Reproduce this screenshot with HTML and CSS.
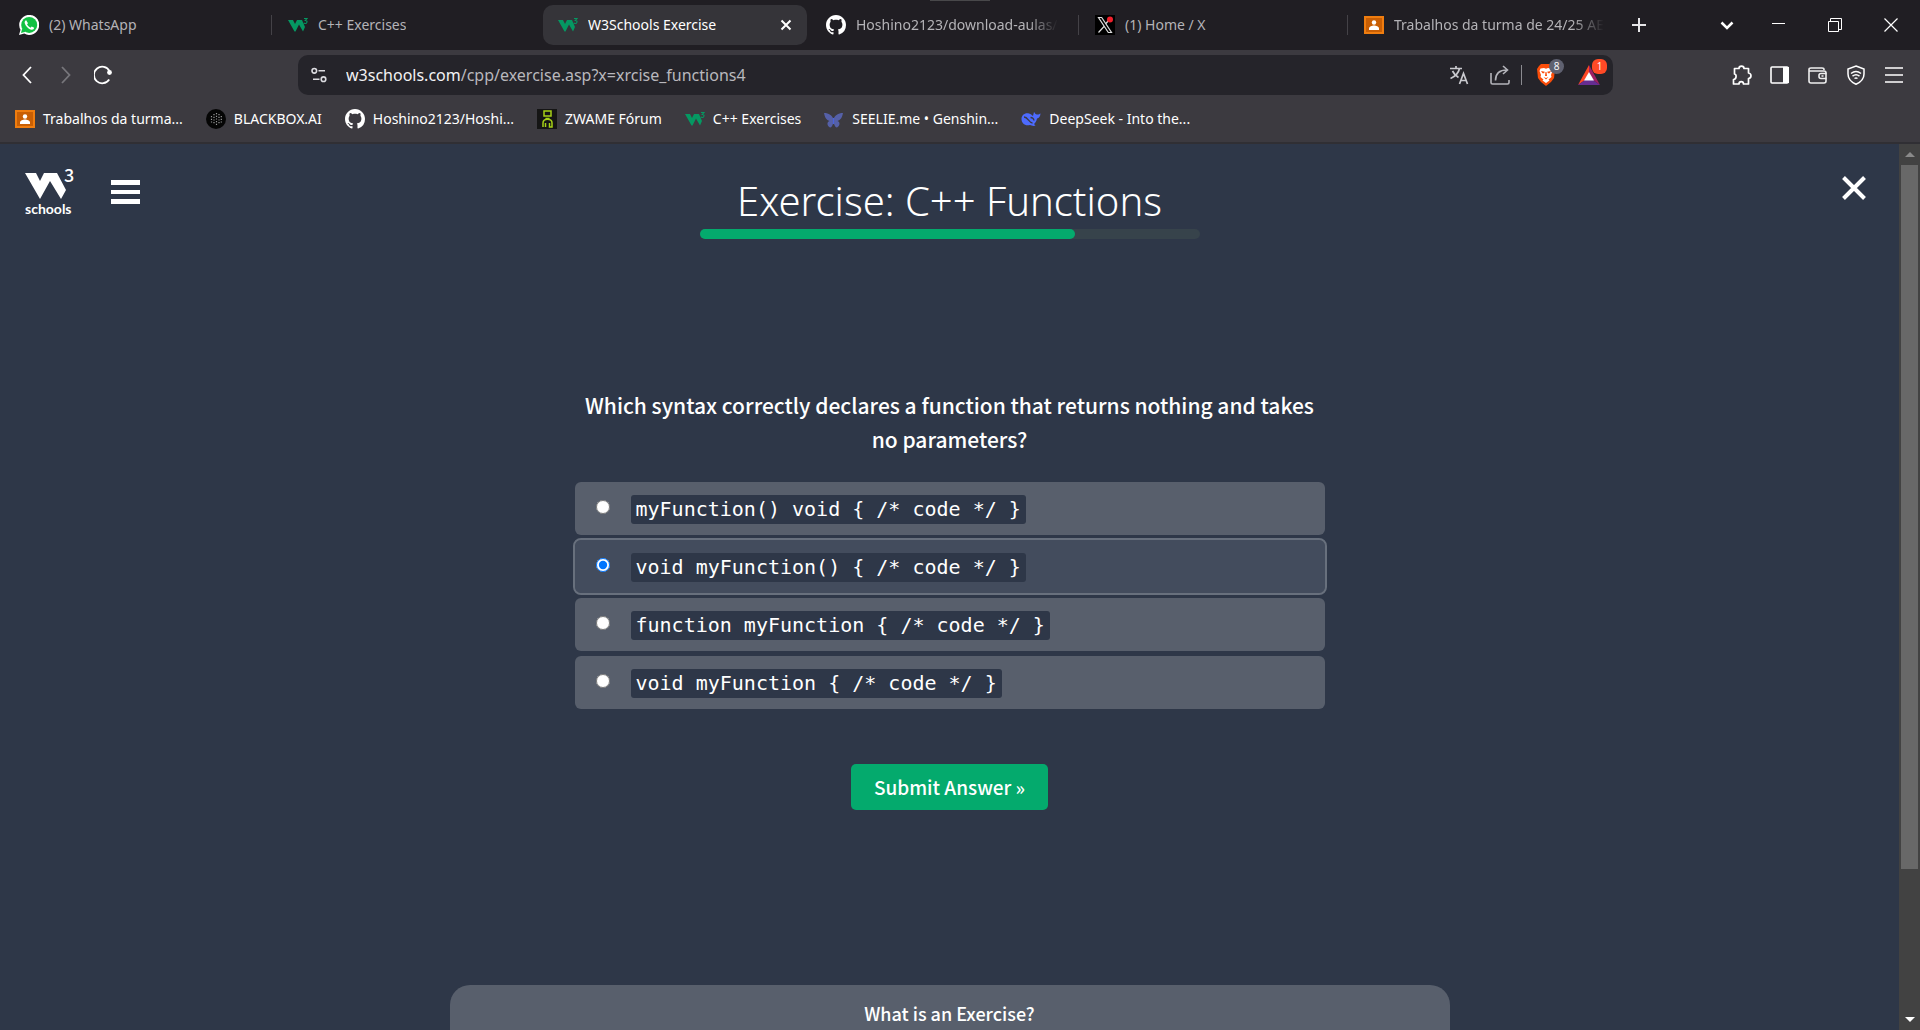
FILE: index.html
```html
<!DOCTYPE html>
<html lang="en">
<head>
<meta charset="utf-8">
<meta name="viewport" content="width=device-width, initial-scale=1">
<title>W3Schools Exercise</title>
<link rel="stylesheet" href="styles.css">
</head>
<body>
<svg class="sprite" aria-hidden="true">
  <symbol id="w3" viewBox="0 0 20 20"><path fill="#059862" d="M0 5H5L7 9 9 5H14L17 12 15 16.500 11 9.500 7.500 16.500H6.500Z"/><path fill="none" stroke="#059862" stroke-width="1.100" d="M16 3.500h3L17.300 5.400c2.600 0 2 3.300-.2 3.100q-.8 0-1.300-.6"/></symbol>
  <symbol id="github" viewBox="0 0 16 16"><path fill="#fff" d="M8 0C3.580 0 0 3.580 0 8c0 3.540 2.290 6.530 5.470 7.590.4.070.55-.17.55-.38 0-.19-.01-.82-.01-1.490-2.010.37-2.530-.49-2.690-.94-.09-.23-.48-.94-.82-1.130-.28-.15-.68-.52-.01-.53.63-.01 1.080.58 1.230.82.72 1.210 1.870.87 2.330.66.070-.52.28-.87.51-1.070-1.780-.2-3.640-.89-3.640-3.950 0-.87.31-1.590.82-2.150-.08-.2-.36-1.020.08-2.120 0 0 .67-.21 2.200.82.64-.18 1.320-.27 2-.27s1.360.09 2 .27c1.530-1.040 2.200-.82 2.200-.82.44 1.100.16 1.920.08 2.120.51.56.82 1.270.82 2.150 0 3.070-1.870 3.750-3.650 3.950.29.25.54.73.54 1.480 0 1.070-.01 1.930-.01 2.200 0 .21.15.46.55.38A8.010 8.010 0 0 0 16 8c0-4.420-3.580-8-8-8z"/></symbol>
  <symbol id="classroom" viewBox="0 0 20 20"><path fill="#ef7d0f" d="M0 1h20v18H0z"/><path fill="#c95f04" d="M2 3h16v14H2z"/><circle cx="10" cy="7.500" r="2.200" fill="#fff"/><path fill="#fff" d="M5 15v-1.500c0-2 3-3 5-3s5 1 5 3V15z"/></symbol>
</svg>

<header class="browser">
  <div class="tabstrip">
    <nav class="tabs" aria-label="Tabs">
      <a class="tab" href="#"><svg class="fav" viewBox="0 0 20 20"><path fill="#fff" d="M0 20l1.500-5.200A10 10 0 1 1 5.300 18.600z"/><circle cx="10.200" cy="9.900" r="8" fill="#12c143"/><path fill="#12c143" d="M2 18l1.200-4.500 3.300 3.300z"/><path fill="#fff" d="M7.200 5.200c-1 .2-1.800 1.300-1.500 2.800.6 2.900 4 6.300 7 6.700 1.300.1 2.400-.8 2.500-2l-2.500-1.300-1.200 1.300c-1.500-.6-2.800-1.900-3.500-3.400l1-1.100z"/></svg><span>(2) WhatsApp</span></a>
      <a class="tab divided" href="#"><svg class="fav"><use href="#w3"/></svg><span>C++ Exercises</span></a>
      <div class="tab active"><svg class="fav"><use href="#w3"/></svg><span>W3Schools Exercise</span><button class="plain tab-close" aria-label="Close tab"><svg width="12" height="12" viewBox="0 0 12 12"><path stroke="#fff" stroke-width="2" d="M1.500 1.500l9 9m0-9l-9 9"/></svg></button></div>
      <a class="tab" href="#"><svg class="fav"><use href="#github"/></svg><span class="fade">Hoshino2123/download-aulas/</span></a>
      <a class="tab divided" href="#"><svg class="fav" viewBox="0 0 20 20"><path d="M0 0h20v20H0z"/><path fill="none" stroke="#ddd" stroke-width="1.200" d="M3.500 2.500h3.200l9.800 15h-3.200zM16 2.500L11 8.500M9 11.500l-5.500 6"/><circle cx="15" cy="4.500" r="3" fill="#f0202c"/></svg><span>(1) Home / X</span></a>
      <a class="tab divided" href="#"><svg class="fav"><use href="#classroom"/></svg><span class="fade">Trabalhos da turma de 24/25 AE</span></a>
    </nav>
    <button class="plain new-tab" aria-label="New tab"><svg width="14" height="14" viewBox="0 0 14 14"><path stroke="#e6e6e8" stroke-width="2" d="M7 0v14M0 7h14"/></svg></button>
    <div class="window-controls">
      <button class="plain" aria-label="Search tabs"><svg width="14" height="14" viewBox="0 0 14 14"><path fill="none" stroke="#fff" stroke-width="2.500" d="M1.500 4.500L7 10l5.500-5.500"/></svg></button>
      <button class="plain" aria-label="Minimize"><svg width="14" height="14" viewBox="0 0 14 14"><path stroke="#fff" d="M0 5.500h13"/></svg></button>
      <button class="plain" aria-label="Restore"><svg width="14" height="14" viewBox="0 0 14 14"><path fill="none" stroke="#fff" d="M.5 3.500h10v10H.5zM2.500 3V.5h11v11H11"/></svg></button>
      <button class="plain" aria-label="Close"><svg width="14" height="14" viewBox="0 0 14 14"><path stroke="#fff" stroke-width="1.200" d="M.5.5l13 13m0-13l-13 13"/></svg></button>
    </div>
  </div>

  <div class="toolbar">
    <div class="nav-buttons">
      <button class="plain" aria-label="Back"><svg width="20" height="20" viewBox="0 0 20 20"><path fill="none" stroke="#fff" stroke-width="1.800" d="M13 2L5.500 10l7.500 8"/></svg></button>
      <button class="plain" aria-label="Forward"><svg width="20" height="20" viewBox="0 0 20 20"><path fill="none" stroke="#77767b" stroke-width="1.800" d="M6 2l7.500 8L6 18"/></svg></button>
      <button class="plain" aria-label="Reload"><svg width="20" height="20" viewBox="0 0 20 20"><path fill="none" stroke="#fff" stroke-width="1.800" d="M15.500 6A8.300 8.300 0 1 0 15.200 14.500"/><circle cx="15.500" cy="7.500" r="2.400" fill="#fff"/></svg></button>
    </div>
    <form class="address" onsubmit="return false">
      <svg width="16" height="16" viewBox="0 0 16 16"><g fill="none" stroke="#dcdce0" stroke-width="1.600"><circle cx="3.300" cy="3.800" r="2.300"/><path d="M7.500 3.800H14M2 12.200h6.500"/><circle cx="12.500" cy="12.200" r="2.300"/></g></svg>
      <div class="url" role="textbox" aria-label="Address"><b>w3schools.com</b>/cpp/exercise.asp?x=xrcise_functions4</div>
      <button class="plain" aria-label="Translate"><svg width="20" height="20" viewBox="0 0 20 20"><g fill="none" stroke="#c9c9ce" stroke-width="1.700"><path d="M1 3.500h12M7 1v2.500M3.500 6c1.500 3 3.500 5 6 6.500M10.500 3.500C9.500 8 6 11.500 1.500 13.500M10.500 19l4-10.500 4 10.500M12 15.500h5"/></g></svg></button>
      <button class="plain" aria-label="Share"><svg width="20" height="20" viewBox="0 0 20 20"><g fill="none" stroke="#b4b4ba" stroke-width="1.600"><path d="M1 8v9.500q0 1.500 1.500 1.500h15q1.500 0 1.500-1.500V15M5.500 15.500C5.500 8.500 9 5 17 5M13 1l4.500 4L13 9"/></g></svg></button>
      <i class="bar"></i>
      <button class="plain badged" aria-label="Brave Shields"><svg width="22" height="22" viewBox="0 0 22 22"><path fill="#fb4d09" d="M6 0h9l3 2 2 3-1 9-3 4-5 4-5-4-3-4L2 5l2-3z"/><path fill="#fff" d="M5.500 4.500L9 4l2 .8L13 4l3.500.5 1 2.500-1.500 4 .5 2-3 2.500 1 1L11 19l-3.500-2.500 1-1-3-2.500.5-2L4.500 7z"/><path fill="#fb4d09" d="M6 7l3.800.8-.8 1.400-1.500 0zM16 7l-3.800.8.8 1.400 1.500 0zM10.500 8h1l.5 4h-2zM8.500 13l2.500 1 2.500-1-2.500 2.500z"/></svg><span class="badge gray">8</span></button>
      <button class="plain badged" aria-label="Brave Rewards"><svg width="22" height="22" viewBox="0 0 22 22"><path fill="#ff4724" d="M11 1L0 21l7-5 4-7z"/><path fill="#9e1f63" d="M11 1l11 20-7-5-4-7z"/><path fill="#662d91" d="M0 21h22l-7-5H7z"/><path fill="#fff" d="M11 8l5 8.500H6z"/></svg><span class="badge">1</span></button>
    </form>
    <div class="tool-buttons">
      <button class="plain" aria-label="Extensions"><svg width="20" height="20" viewBox="0 0 20 20"><path fill="none" stroke="#fff" stroke-width="1.700" stroke-linejoin="round" d="M2.500 3.500H7C7 .3 12 .3 12 3.500h4.500V8c3.300.5 3.300 5 0 5.500V19h-5c0-3.200-4.500-3.200-4.500 0H1.500v-4.500c3 0 3.500-5 1-5.500z"/></svg></button>
      <button class="plain" aria-label="Sidebar"><svg width="20" height="20" viewBox="0 0 20 20"><rect x="1" y="2" width="17" height="16" rx="1" fill="none" stroke="#fff" stroke-width="1.600"/><path fill="#fff" d="M13 2h6v16h-6z"/></svg></button>
      <button class="plain" aria-label="Wallet"><svg width="20" height="20" viewBox="0 0 20 20"><g fill="none" stroke="#eee" stroke-width="1.600"><path d="M16 5V4.500Q16 3 14 3H3Q1 3 1 4.500V16q0 2 2 2h13q2 0 2-2V8q0-2-2-2H1"/><path d="M18.500 8.500H13q-2 0-2 2v1q0 2 2 2h5.500M13.500 11h2"/></g></svg></button>
      <button class="plain" aria-label="VPN"><svg width="20" height="20" viewBox="0 0 20 20"><g fill="none" stroke="#fff" stroke-width="1.500"><path d="M10 1l8 3v5c0 5-4 8.500-8 10.200C6 17.500 2 14 2 9V4z"/><path d="M5 8.500q5-4 10 0M6.500 11.200q3.500-2.800 7 0M8.500 13.500q1.500-1 3 0"/></g></svg></button>
      <button class="plain" aria-label="Menu"><svg width="20" height="20" viewBox="0 0 20 20"><path stroke="#fff" stroke-width="1.600" d="M1 3h18M1 10h18M1 17h18"/></svg></button>
    </div>
  </div>

  <nav class="bookmarks" aria-label="Bookmarks">
    <a href="#"><svg class="fav"><use href="#classroom"/></svg>Trabalhos da turma...</a>
    <a href="#"><svg class="fav" viewBox="0 0 20 20"><circle cx="10" cy="10" r="10" fill="#050505"/><g fill="none" stroke="#999" stroke-width="1.200" stroke-dasharray="1.200 1.500"><path d="M5.500 7v7M8 5v10.500M10.500 4v12.500M13 5v10.500M15.300 7v7"/></g></svg>BLACKBOX.AI</a>
    <a href="#"><svg class="fav"><use href="#github"/></svg>Hoshino2123/Hoshi...</a>
    <a href="#"><svg class="fav" viewBox="0 0 20 20"><path fill="#151515" d="M0 0h20v20H0z"/><path fill="none" stroke="#a6d117" stroke-width="1.500" d="M7 2h7v5H7zM8.500 9.500h4M6 18v-4c0-5 9-5 9 0v4h-2.500v-4M8.500 18v-4"/></svg>ZWAME Fórum</a>
    <a href="#"><svg class="fav"><use href="#w3"/></svg>C++ Exercises</a>
    <a href="#"><svg class="fav" viewBox="0 0 20 20"><path fill="#5560a8" d="M0 4c5 0 8 2.500 9.500 6C11 6.500 14 4 19 4c-1 5-2.500 7-5.500 8 3 1 2.500 5-.5 6.500-1.500 0-2.500-2-3.500-5-1 3-2 5-3.500 5-3-1.500-3.500-5.500-.5-6.500C2.500 11 1 9 0 4z"/><path stroke="#4a63dd" d="M9.500 9v6"/></svg>SEELIE.me • Genshin...</a>
    <a href="#"><svg class="fav" viewBox="0 0 20 20"><path fill="#4d6bfe" d="M.5 10C.5 6 4 3.500 8 4.500c2 .5 2.500 1.500 4 2.500l1-4c1 1 1.500 2.500 3 2.500 1.500.2 2.500-.5 3.500-1-.2 3-1.500 4.500-3.500 5-.5 3-2 4.500-3 5.500l1.500 1.500c-2 1-4 0-5.500-.5C4 17.500.5 14 .5 10z"/><path fill="none" stroke="#3c3a40" stroke-width="1.300" d="M3 8c4 0 5 6 8.500 6M9.500 8.500q3 0 3.500 3"/></svg>DeepSeek - Into the...</a>
  </nav>
</header>

<div class="viewport">
  <main class="page">
    <div class="page-head">
      <div class="brand">
        <a class="logo" href="#" aria-label="W3Schools"><svg width="50" height="62" viewBox="0 -7 50 62" fill="#fff"><path d="M0 5H11L15 13 19 5H32L41 22 36 31 25 13 15 31Z"/><text x="39" y="14" font-size="18" font-weight="500">3</text><text class="wordmark" x="0" y="46" font-size="14">schools</text></svg></a>
        <button class="plain" aria-label="Open menu"><svg width="29" height="24" viewBox="0 0 29 24"><path fill="#fff" d="M0 0h29v5H0zM0 10h29v4H0zM0 19h29v5H0z"/></svg></button>
      </div>
      <div class="title">
        <h1>Exercise: C++ Functions</h1>
        <div class="progress" role="progressbar" aria-label="Progress" aria-valuenow="75" aria-valuemin="0" aria-valuemax="100"><div class="fill" style="width:75%"></div></div>
      </div>
      <button class="plain page-close" aria-label="Close exercise"><svg width="24" height="24" viewBox="0 0 24 24"><path stroke="#fff" stroke-width="4" d="M1.500 1.500l21 21m0-21l-21 21"/></svg></button>
    </div>

    <form class="exercise" onsubmit="return false">
      <fieldset>
        <legend>Which syntax correctly declares a function that returns nothing and takes no parameters?</legend>
        <div class="options">
          <label class="option"><input type="radio" name="answer"><code>myFunction() void { /* code */ }</code></label>
          <label class="option"><input type="radio" name="answer" checked><code>void myFunction() { /* code */ }</code></label>
          <label class="option"><input type="radio" name="answer"><code>function myFunction { /* code */ }</code></label>
          <label class="option"><input type="radio" name="answer"><code>void myFunction { /* code */ }</code></label>
        </div>
      </fieldset>
      <button class="submit" type="submit">Submit Answer »</button>
    </form>

    <section class="about"><h2>What is an Exercise?</h2></section>
  </main>
  <div class="scrollbar" aria-hidden="true">
    <i class="arrow up"></i>
    <div class="track"><div class="thumb" style="height:83.4%"></div></div>
    <i class="arrow down"></i>
  </div>
</div>
</body>
</html>
```
FILE: styles.css
```css
* { box-sizing: border-box; }
body {
  margin: 0;
  height: 100vh;
  display: flex;
  flex-direction: column;
  overflow: hidden;
  background: #2e3748;
  color: #fff;
  font-family: "Noto Sans CJK JP", "Open Sans", sans-serif;
}
svg { display: block; flex: none; }
a { color: inherit; text-decoration: none; }
.sprite { position: absolute; width: 0; height: 0; }
.plain {
  display: flex;
  align-items: center;
  justify-content: center;
  padding: 0;
  border: 0;
  background: none;
}
.fav { width: 20px; height: 20px; }

/* Browser chrome */
.browser {
  flex: none;
  background: #3c3a40;
  border-bottom: 2px solid #302f34;
  font-family: "Noto Sans", "Open Sans", sans-serif;
  font-size: 14px;
  font-weight: 400;
  line-height: 20px;
}
.tabstrip {
  display: flex;
  align-items: center;
  height: 50px;
  padding-left: 2px;
  background: linear-gradient(#48484a, #48484a) 50% 0 / 60px 1px no-repeat #201e23;
}
.tabs { display: flex; flex: 0 1 1614px; min-width: 0; }
.tab {
  position: relative;
  display: flex;
  flex: 1 1 0;
  min-width: 0;
  align-items: center;
  gap: 10px;
  height: 40px;
  padding: 0 12px 0 17px;
  color: #b4b3b7;
  white-space: nowrap;
}
.tab span { overflow: hidden; }
.tab.divided::before {
  content: "";
  position: absolute;
  left: 0;
  top: 10px;
  width: 1px;
  height: 20px;
  background: #444247;
}
.tab.active {
  flex: 0 1 264px;
  margin: 0 2px 0 3px;
  padding-left: 15px;
  border-radius: 10px;
  background: #353439;
  color: #fff;
}
.tab-close { margin-left: auto; padding-right: 3px; }
.fade { -webkit-mask-image: linear-gradient(to right, #000 85%, transparent); mask-image: linear-gradient(to right, #000 85%, transparent); }
.new-tab { padding: 0 16px; }
.window-controls { display: flex; gap: 42px; margin-left: auto; padding-right: 22px; }
.window-controls .plain:first-child { margin-right: -4px; }

.toolbar { display: flex; align-items: center; height: 50px; }
.nav-buttons { display: flex; gap: 18px; flex: 0 0 298px; padding-left: 18px; }
.address {
  display: flex;
  flex: 1;
  min-width: 0;
  align-items: center;
  height: 40px;
  padding: 0 13px;
  border-radius: 10px;
  background: #25242a;
}
.url { flex: 1; margin-left: 19px; color: #b9b8bd; font-size: 16px; white-space: nowrap; overflow: hidden; }
.url b { color: #f2f2f4; font-weight: 400; }
.address .plain { margin-left: 21px; }
.bar { width: 1px; height: 20px; margin-left: 11px; background: #8b8b90; }
.address .bar + .plain { margin-left: 13px; }
.badged { position: relative; }
.badge {
  position: absolute;
  left: 14px;
  top: -5px;
  width: 15px;
  height: 15px;
  border-radius: 6px;
  background: #ff4a26;
  color: #fff;
  font: 10px/15px "Open Sans", sans-serif;
  text-align: center;
}
.badge.gray { background: #5f6170; border-radius: 8px; }
.tool-buttons { display: flex; gap: 18px; flex: 0 0 307px; justify-content: flex-end; padding-right: 16px; }

.bookmarks { display: flex; gap: 23px; height: 42px; padding: 0 15px 4px; align-items: center; white-space: nowrap; }
.bookmarks a { display: flex; align-items: center; gap: 8px; }

/* Page */
.viewport { display: flex; flex: 1; min-height: 0; }
.page { flex: 1; min-width: 0; overflow: hidden; }
.page-head { display: grid; grid-template-columns: 1fr 500px 1fr; align-items: start; padding: 17px 25px 0; }
.brand { display: flex; align-items: center; gap: 36px; }
.wordmark { font-family: Lato, sans-serif; font-weight: 700; }
.title { padding-top: 12px; text-align: center; }
h1 { margin: 0; font: 300 40px/56px "Noto Sans", "Open Sans", sans-serif; white-space: nowrap; }
.progress { height: 10px; border-radius: 5px; background: #37434b; }
.fill { height: 100%; border-radius: 5px; background: #04aa6d; }
.page-close { justify-self: end; padding: 15px 8px 0 0; }

.exercise { width: 750px; max-width: 100%; margin: 149px auto 0; }
fieldset { margin: 0; padding: 0; border: 0; min-width: 0; }
legend { width: 100%; padding: 0 8px 26px; font-size: 21px; font-weight: 500; line-height: 34px; text-align: center; }
.options { display: grid; gap: 5px; }
.option {
  display: flex;
  align-items: center;
  gap: 21px;
  height: 53px;
  padding: 1px 21px 0;
  border-radius: 6px;
  background: #585f6c;
}
.option:has(:checked) { background: #434c5d; outline: 2px solid #68707d; }
.option input { width: 14px; height: 14px; margin: 0 0 4px; }
code {
  padding: 0 5px;
  border-radius: 3px;
  background: #2e3748;
  font: 20px/29px "DejaVu Sans Mono", monospace;
  white-space: pre;
}
.submit {
  display: block;
  height: 46px;
  margin: 55px auto 0;
  padding: 0 23px;
  border: 0;
  border-radius: 5px;
  background: #04aa6d;
  color: #fff;
  font: 500 19px/30px "Noto Sans CJK JP", sans-serif;
}
.about {
  width: 1000px;
  max-width: 100%;
  height: 200px;
  margin: 175px auto 0;
  padding-top: 13px;
  border-radius: 20px;
  background: #585f6c;
  text-align: center;
}
h2 { margin: 0; font-size: 18px; font-weight: 500; line-height: 30px; }

.scrollbar { display: flex; flex: 0 0 21px; flex-direction: column; padding: 0 2px; background: #424242; }
.track { flex: 1; }
.thumb { background: #686868; }
.arrow { height: 21px; display: grid; place-items: center; }
.arrow::before { content: ""; border: 5px solid transparent; }
.arrow.up::before { border-top: 0; border-bottom-color: #8a8a8a; }
.arrow.down::before { border-bottom: 0; border-top-color: #fff; }
```
